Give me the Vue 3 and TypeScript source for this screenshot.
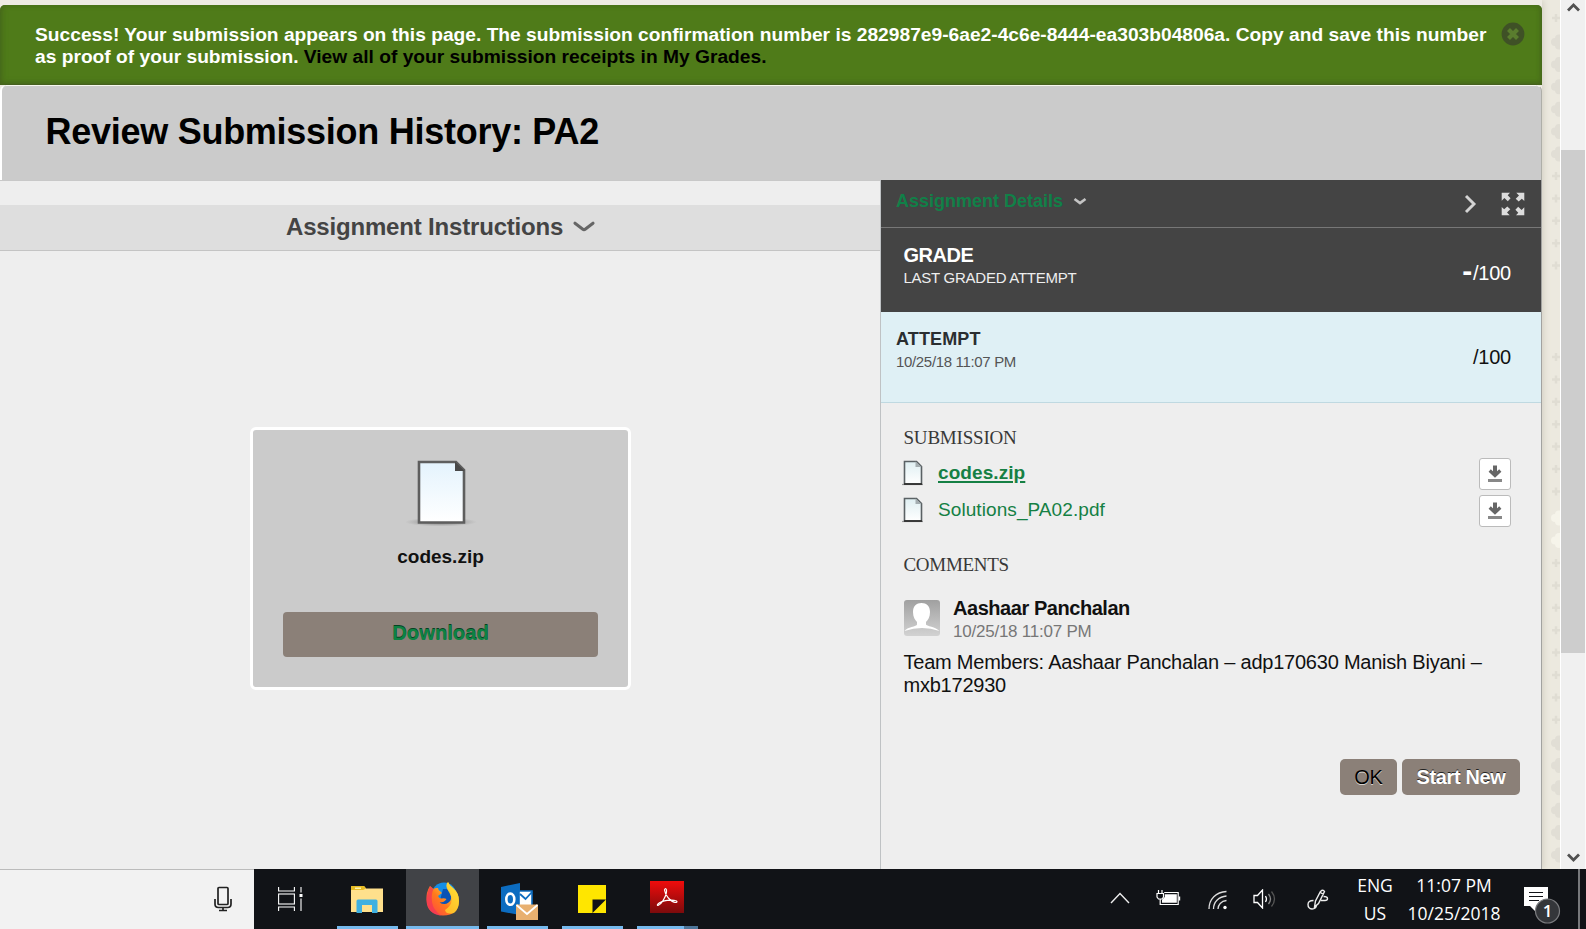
<script setup lang="ts">
type Mark = { y: number; kind: 'blob' | 'plus' | 'light' }

const files = [
  { name: 'codes.zip', current: true },
  { name: 'Solutions_PA02.pdf', current: false },
]

const range = (from: number, count: number, kind: Mark['kind']): Mark[] =>
  Array.from({ length: count }, (_, i) => ({ y: from + i * 22.4, kind }))

// Suit-like ornaments repeated down the page's right margin
const marks: Mark[] = [
  ...range(18, 1, 'plus'),
  ...range(42, 6, 'blob'),
  ...range(176, 5, 'plus'),
  ...range(357, 7, 'plus'),
  ...range(518, 2, 'light'),
  ...range(563, 8, 'plus'),
  ...range(743, 6, 'blob'),
]
</script>

<template>
  <div class="screen">
    <div class="browser">
      <div class="page">
        <div class="banner">
          <p>Success! Your submission appears on this page. The submission confirmation number is 282987e9-6ae2-4c6e-8444-ea303b04806a. Copy and save this number<br>as proof of your submission. <a>View all of your submission receipts in My Grades.</a></p>
          <svg class="close" width="24" height="24" viewBox="0 0 24 24">
            <circle cx="12" cy="12" r="11.4" fill="#3f5126" />
            <path d="M7.500 7.500l9 9M16.500 7.500l-9 9" stroke="#5a7d2e" stroke-width="4.200" />
          </svg>
        </div>
        <div class="title"><h1>Review Submission History: PA2</h1></div>
        <div class="content">
          <main class="left">
            <div class="instructions">
              <span>Assignment Instructions</span>
              <svg width="22" height="12" viewBox="0 0 22 12"><path d="M2 2.200L9.500 8Q11 9.200 12.500 8L20 2.200" fill="none" stroke="#666" stroke-width="3" stroke-linecap="round" /></svg>
            </div>
            <div class="preview">
              <svg class="bigdoc" width="72" height="72" viewBox="0 0 72 72">
                <defs>
                  <linearGradient id="paper" x1="0" y1="0" x2="0" y2="1"><stop offset="0" stop-color="#e4f3fd" /><stop offset="1" stop-color="#fff" /></linearGradient>
                  <radialGradient id="shade"><stop offset="0" stop-color="#555" stop-opacity=".8" /><stop offset="1" stop-color="#777" stop-opacity="0" /></radialGradient>
                </defs>
                <ellipse cx="36" cy="63" rx="36" ry="4.500" fill="url(#shade)" />
                <path d="M14 3h37l8 8v52.500H14z" fill="url(#paper)" stroke="#5e5e5e" stroke-width="2.600" />
                <path d="M50 2.500v9.500h9.500z" fill="#484848" />
              </svg>
              <strong>codes.zip</strong>
              <button class="download">Download</button>
            </div>
          </main>
          <aside class="side">
            <div class="details">
              <span>Assignment Details</span>
              <svg class="small-chev" width="14" height="9" viewBox="0 0 14 9"><path d="M1.500 2L7 6L12.500 2" fill="none" stroke="#c4c4c4" stroke-width="2.700" /></svg>
              <svg class="next" width="13" height="20" viewBox="0 0 13 20"><path d="M2 2L10 10L2 18" fill="none" stroke="#d4d4d4" stroke-width="2.900" /></svg>
              <svg class="expand" width="24" height="24" viewBox="0 0 24 24">
                <g v-for="a in [0, 90, 180, 270]" :key="a" :transform="`rotate(${a} 12 12)`">
                  <path d="M.7 .7h8.300L6.700 3.200L9.600 6.300L6.800 9.300L3.400 6L.7 8.700z" fill="#ddd" />
                </g>
              </svg>
            </div>
            <div class="grade">
              <div><h2>GRADE</h2><p>LAST GRADED ATTEMPT</p></div>
              <div class="score"><b>-</b><span>/100</span></div>
            </div>
            <div class="attempt">
              <div><h2>ATTEMPT</h2><p>10/25/18 11:07 PM</p></div>
              <div class="score"><span>/100</span></div>
            </div>
            <section class="body">
              <h3 class="sub">SUBMISSION</h3>
              <div v-for="f in files" :key="f.name" class="file" :class="{ current: f.current }">
                <svg width="22" height="26" viewBox="0 0 22 26">
                  <defs><linearGradient id="sheet" x1="0" y1="0" x2="0" y2="1"><stop offset="0" stop-color="#dfeff2" /><stop offset="1" stop-color="#fff" /></linearGradient></defs>
                  <path d="M0 24.500h21" stroke="#999" stroke-width="1.200" />
                  <path d="M2.500 1.500h12l5 5v17.500h-17z" fill="url(#sheet)" stroke="#5a6164" stroke-width="1.600" />
                  <path d="M13.500 1.500v5.500h6z" fill="#a4adb0" />
                  <path d="M2 24h18" stroke="#333" stroke-width="1.800" />
                </svg>
                <a>{{ f.name }}</a>
                <button class="get">
                  <svg width="16" height="18" viewBox="0 0 16 18"><path d="M8 .5v8" stroke="#666" stroke-width="4" /><path d="M2.700 5.500L8 10.500L13.300 5.500" fill="none" stroke="#666" stroke-width="3.200" /><path d="M1 15.500h14" stroke="#888" stroke-width="3" /></svg>
                </button>
              </div>
              <h3 class="com">COMMENTS</h3>
              <div class="author">
                <svg width="36" height="36" viewBox="0 0 36 36">
                  <defs><linearGradient id="av" x1="0" y1="0" x2="0" y2="1"><stop offset="0" stop-color="#a0a0a0" /><stop offset="1" stop-color="#d2d2d2" /></linearGradient></defs>
                  <rect width="36" height="36" rx="3" fill="url(#av)" />
                  <path d="M9 12C9 6 12.500 3 17.500 3S26 6 26 12c0 5-2 8-4 10v2.500c0 1.500 10 2.500 13.500 6.500Q18 25 .5 31C3 27 13 26.500 13 24.500V22c-2-2-4-5-4-10z" fill="#fff" />
                </svg>
                <div><strong>Aashaar Panchalan</strong><span>10/25/18 11:07 PM</span></div>
              </div>
              <p class="comment">Team Members: Aashaar Panchalan – adp170630 Manish Biyani –<br>mxb172930</p>
              <div class="actions">
                <button class="ok">OK</button>
                <button class="new">Start New</button>
              </div>
            </section>
          </aside>
        </div>
      </div>
      <svg class="texture" width="18" height="869" viewBox="0 0 18 869">
        <template v-for="m in marks" :key="m.y">
          <path v-if="m.kind === 'plus'" :transform="`translate(14 ${m.y})`" d="M-4 0h8M0-4v8" stroke="#e0ddd3" stroke-width="2.500" />
          <g v-else :transform="`translate(14 ${m.y})`" :fill="m.kind === 'light' ? '#f6f4ea' : '#e1ded5'">
            <circle cx="-1" cy="0" r="4" /><circle cx="3" cy="-3.500" r="4" /><circle cx="3" cy="3.500" r="4" />
          </g>
        </template>
      </svg>
      <div class="scroll">
        <svg width="24" height="16" viewBox="0 0 24 16"><path d="M7 10.500L12.500 5L18 10.500" fill="none" stroke="#505050" stroke-width="2.800" /></svg>
        <div class="thumb"></div>
        <svg class="down" width="24" height="22" viewBox="0 0 24 22"><path d="M7 7.500L12.500 13L18 7.500" fill="none" stroke="#505050" stroke-width="2.800" /></svg>
      </div>
    </div>

    <footer class="taskbar">
      <div class="search">
        <svg width="18" height="26" viewBox="0 0 18 26" fill="none" stroke="#222" stroke-width="1.700"><rect x="4" y="1.500" width="10" height="17" rx="1" /><path d="M1 13v5q0 3.500 3.500 3.500h9q3.500 0 3.500-3.500v-5M9 21.500v3M5 24.500h8" /></svg>
      </div>
      <div class="task view">
        <svg width="26" height="24" viewBox="0 0 26 24" fill="none" stroke="#fff" stroke-width="1.100"><path d="M.6 0v4h15.800V0M.6 24v-4h15.800v4M23 0v5.500M23 11.500V24" /><rect x=".6" y="7" width="15.800" height="10" /><rect x="21.500" y="7" width="3" height="3" fill="#fff" stroke="none" /></svg>
      </div>
      <div class="task folder">
        <svg width="32" height="27" viewBox="0 0 32 27"><path d="M0 1q0-1 1-1h12l2 2.500h17V26H0z" fill="#ffe08c" /><path d="M0 1q0-1 1-1h12l2 2.500L12 4H0z" fill="#e8bd24" /><path d="M4 1.500h6v1.500H4z" fill="#fff2b0" /><path d="M5.500 27V15q0-1.500 1.500-1.500h18q1.500 0 1.500 1.500v12H21v-8H11v8z" fill="#3fb0e0" /></svg>
      </div>
      <div class="task firefox">
        <svg width="34" height="35" viewBox="0 0 34 35">
          <defs>
            <linearGradient id="ff" x1="0" y1="1" x2="1" y2="0"><stop offset="0" stop-color="#ff3a4c" /><stop offset=".45" stop-color="#ff7a1c" /><stop offset=".8" stop-color="#ffd43a" /><stop offset="1" stop-color="#fff04a" /></linearGradient>
          </defs>
          <circle cx="18" cy="14" r="12.500" fill="#148fe8" />
          <path d="M17 8h8v15H13z" fill="#0a53b5" />
          <path d="M4 5l3.500 3Q9 6.500 12 7q0 2 2.500 3.500l1.500 1.500-4 3q1 2.500 3.500 2.500 3-.5 5 .5-2 3.500-7 3.500 5 3 9 0 4-3 2-8-1-3.500-3-5Q19 4 22 1q1 3 5 6 6 5 6 13 0 14-16 14.500Q1 34 .5 19 0 11 4 5z" fill="url(#ff)" />
          <path d="M4 5q-3 6-3.500 13Q1 33 15 34.500 7 29 6 21 5 13 7.500 8z" fill="#f0315c" opacity=".65" />
          <path d="M22 1q1 3 5 6 6 5 6 13 0 8-5 12-8 2-9-3 10-7 5-16-4-5-2-12z" fill="#ffd72f" opacity=".75" />
        </svg>
      </div>
      <div class="task outlook">
        <svg width="38" height="38" viewBox="0 0 38 38"><path d="M0 4L19 0v32L0 28.500z" fill="#0c6cc0" /><path d="M18 8h13v16H18z" fill="#fff" stroke="#0c6cc0" stroke-width="1.600" /><path d="M19 11l5.500 5 6.500-7" fill="none" stroke="#0c6cc0" stroke-width="1.800" /><ellipse cx="9.300" cy="16.200" rx="4" ry="5.600" fill="none" stroke="#fff" stroke-width="2.600" /><path d="M15 21.500h22V37H15z" fill="#e8b070" /><path d="M15.500 22l10.500 9 10.500-9" fill="none" stroke="#fff" stroke-width="1.800" /></svg>
      </div>
      <div class="task notes">
        <svg width="28" height="28" viewBox="0 0 28 28"><path d="M0 0h28v28H0z" fill="#ffe600" /><path d="M14.500 28V14.500H28z" fill="#111317" /></svg>
      </div>
      <div class="task acrobat">
        <svg width="34" height="32" viewBox="0 0 34 32"><defs><linearGradient id="ac" x1="0" y1="0" x2="0" y2="1"><stop offset="0" stop-color="#f00c0c" /><stop offset="1" stop-color="#7c0b0c" /></linearGradient></defs><path d="M0 0h34v32H0z" fill="url(#ac)" /><path d="M8 24.500C12 23 17 14 16.500 9q-1-3-2 0C15 13.500 20 20.500 25 21.500q3 0 1.500-1.500C22 18 12 19.500 8.500 22.500q-2 2-.5 2z" fill="none" stroke="#fff" stroke-width="1.200" /></svg>
      </div>
      <div class="tray">
        <svg class="t1" width="20" height="12" viewBox="0 0 20 12"><path d="M1 11l9-9.500L19 11" fill="none" stroke="#eee" stroke-width="1.400" /></svg>
        <svg class="t2" width="25" height="18" viewBox="0 0 25 18"><path d="M1 4.500h6.500v3.500L6 10H2.500L1 8zM2.500 1v3M6 1v3M4.200 10v5.500h18v-12h-14" fill="none" stroke="#fff" stroke-width="1.200" /><path d="M6 13.800V10.800L8.800 8V5.200h12v8.600zM22.800 7.500h1.400v4h-1.400z" fill="#fff" /></svg>
        <svg class="t3" width="20" height="20" viewBox="0 0 20 20" fill="none" stroke="#ddd" stroke-width="1.300"><path d="M1 19C1 9 8 2 18.500 1.500M5.500 19C5.500 12 11 6.500 18.500 6M10 19c0-4 3-8 8.500-8.500" /><circle cx="17" cy="17.500" r="1.700" fill="#fff" stroke="none" /></svg>
        <svg class="t4" width="24" height="20" viewBox="0 0 24 20" fill="none" stroke="#fff" stroke-width="1.300"><path d="M1 6.500h3.500L9.500 1v18l-5-5.500H1z" /><path d="M12.500 7q2 3 0 6" /><path d="M15.500 5q4 5 0 10" stroke="#888" /><path d="M18.500 2.500q6 7.500 0 15" stroke="#555" /></svg>
        <svg class="t5" width="22" height="22" viewBox="0 0 22 22" fill="none" stroke="#eee" stroke-width="1.400"><path d="M7.500 18L8.500 12L13.500 2.500Q16 0 17.500 2.500L11.500 14.500zM13.500 3.500l3 2M6.500 11.500Q1 11.500 1 15.500T5 20Q9 20 9.500 16.500M14 11.500H18q2.500 0 2.500-2T16.500 7.500" /></svg>
        <div class="lang"><span>ENG</span><span>US</span></div>
        <div class="clock"><span>11:07 PM</span><span>10/25/2018</span></div>
        <svg class="t6" width="37" height="38" viewBox="0 0 37 38"><path d="M0 0h24v19H12v6l-6-6H0z" fill="#fff" /><path d="M5 5.500h14M5 9.500h14M5 13.500h10" stroke="#111317" stroke-width="1.200" /><circle cx="23.500" cy="24" r="12" fill="#34363a" stroke="#7a7b7e" stroke-width="1.200" /><text x="23.500" y="30" text-anchor="middle" fill="#fff" font-family="Open Sans" font-weight="600" font-size="17">1</text></svg>
      </div>
    </footer>
  </div>
</template>

<style>
html, body { margin: 0; overflow: hidden; }
</style>

<style scoped>
* { box-sizing: border-box; }
h1, h2, h3, p { margin: 0; font-weight: normal; white-space: nowrap; }
span, a, strong { white-space: nowrap; }
svg { display: block; flex: none; }
button { border: 0; padding: 0; font: inherit; }
.screen { width: 1586px; height: 929px; display: flex; flex-direction: column; overflow: hidden; font-family: "Liberation Sans", Arial, sans-serif; color: #111; background: #eee; }
.browser { height: 869px; display: flex; background: #ece9df; }
.page { width: 1542px; display: flex; flex-direction: column; padding-top: 5px; background: #eeebe3; box-shadow: 2px 0 6px #d5d2c6; }
.banner { height: 80px; display: flex; background: #4f7b19; border-radius: 5px 5px 0 0; box-shadow: inset 0 -3px 6px -2px #46601f, inset -3px 0 5px -2px #46681b, inset 3px 0 6px -2px #46681b; padding: 19px 17px 0 35px; justify-content: space-between; }
.banner p { font-size: 19.2px; line-height: 22px; font-weight: bold; letter-spacing: .005px; color: #fff; }
.banner a { color: #000; }
.close { margin-top: -2px; }
.title { height: 95px; background: #cbcbcb; border-top: 1px solid #f5f8ee; border-left: 2px solid #fff; border-right: 1px solid #aeaea8; border-radius: 6px 6px 0 0; padding: 26px 0 0 43.5px; box-shadow: 0 -6px 0 -5px #46601f, 0 4px 0 0 #cbcbcb; }
.title { position: relative; }
.title::before { content: ""; position: absolute; z-index: -1; }
.title h1 { font-size: 36px; line-height: 40px; font-weight: bold; letter-spacing: -.27px; color: #000; }
.content { flex: 1; display: flex; border-right: 1px solid #a2a2a0; position: relative; }
.left { width: 880px; background: #eee; border-top: 1px solid #c8c8c8; padding-top: 24px; }
.instructions { height: 46px; background: #dedede; border-bottom: 1px solid #c4c4c4; display: flex; padding: 8px 0 0 286px; font-size: 24px; line-height: 28px; font-weight: bold; letter-spacing: -.18px; color: #444; }
.instructions svg { margin: 8px 0 0 10px; }
.preview { width: 381px; height: 263px; margin: 176px 0 0 250px; background: #cbcbcb; border: 3px solid #fff; border-radius: 6px; display: flex; flex-direction: column; align-items: center; padding-top: 29px; }
.preview strong { font-size: 19px; line-height: 22px; margin-top: 15px; }
.download { width: 315px; height: 45px; margin-top: 44px; background: #8b8078; border-radius: 4px; color: #0d8243; font-size: 20.200px; font-weight: bold; line-height: 42px; padding-bottom: 3px; text-shadow: 0 -1px 0 #064222; }
.side { width: 661px; background: #eee; border-left: 1px solid #bfc2c4; display: flex; flex-direction: column; }
.details { height: 48px; background: #444; border-bottom: 1px solid #777; display: flex; padding-left: 15px; font-size: 18px; line-height: 20px; font-weight: bold; color: #118048; }
.details span { margin-top: 11px; }
.small-chev { margin: 17px 0 0 10px; }
.next { margin: 14px 24px 0 auto; }
.expand { margin: 12px 16px 0 0; }
.grade { height: 84px; background: #444; color: #fff; display: flex; justify-content: space-between; padding: 15px 30px 0 22.500px; }
.grade h2 { font-size: 20px; line-height: 22px; font-weight: bold; letter-spacing: -.5px; padding-top: 1px; }
.grade p { font-size: 15px; line-height: 20px; letter-spacing: -.26px; margin-top: 2px; color: #eee; }
.score { font-size: 20px; line-height: 24px; letter-spacing: -.25px; display: flex; margin-top: 18px; }
.score b { font-size: 30px; line-height: 20px; margin-right: 1px; }
.attempt { height: 91px; background: #dff0f5; border-bottom: 1px solid #bfd9e1; display: flex; justify-content: space-between; padding: 17px 30px 0 15px; }
.attempt .score { margin-top: 16px; }
.attempt h2 { font-size: 18px; line-height: 20px; font-weight: bold; letter-spacing: .12px; color: #2a2e30; }
.attempt p { font-size: 15px; line-height: 18px; letter-spacing: -.33px; color: #555; margin-top: 4px; }
.body { padding: 23px 21px 0 22.500px; }
.body h3 { font-family: "Liberation Serif", Georgia, serif; font-size: 19px; line-height: 24px; letter-spacing: -.2px; color: #383838; width: max-content; }
.file { height: 37px; display: flex; font-size: 19px; line-height: 24px; color: #158044; letter-spacing: .08px; }
.sub + .file { margin-top: 8px; }
.file > svg { margin: 2px 14px 0 -1.500px; }
.file a { margin-top: 3px; }
.current a { font-weight: bold; text-decoration: underline; text-decoration-thickness: 2px; text-underline-offset: 2px; }
.get { width: 32px; height: 32px; background: #fff; border: 1px solid #bbb; border-radius: 3px; margin: 0 9px 0 auto; display: flex; justify-content: center; padding-top: 6px; }
.body .com { margin-top: 21px; letter-spacing: -.3px; }
.author { display: flex; margin-top: 23px; height: 48px; }
.author div { display: flex; flex-direction: column; align-items: flex-start; margin-left: 13.500px; }
.author strong { font-size: 20px; line-height: 22px; letter-spacing: -.45px; margin-top: -3px; }
.author span { font-size: 17px; line-height: 22px; letter-spacing: -.23px; color: #777; margin-top: 2px; }
.comment { font-size: 20px; line-height: 23px; letter-spacing: -.225px; margin-top: 3px; }
.actions { display: flex; justify-content: flex-end; gap: 5px; margin-top: 62px; }
.actions button { height: 36px; background: #8b8078; border-radius: 5px; font-size: 20px; line-height: 36px; letter-spacing: -.25px; }
.ok { width: 57px; color: #000; text-shadow: 0 1px 0 #d8d4d0; }
.actions .new { width: 118px; color: #fff; font-weight: bold; text-shadow: 0 -1px 0 #222; letter-spacing: -.35px; }
.scroll { width: 26px; height: 869px; background: #f0f0f0; border-left: 1px solid #fff; border-right: 1px solid #fafafa; display: flex; flex-direction: column; }
.thumb { height: 503px; margin-top: 134px; background: #cdcdcd; }
.down { margin-top: auto; }
.taskbar { height: 60px; background: #111317; display: flex; }
.search { width: 254px; background: #f2f2f2; border-top: 1px solid #bbb; padding: 16px 0 0 214px; }
.task { height: 60px; position: relative; }
.view { width: 83px; padding: 18px 0 0 24px; }
.folder { width: 61px; padding: 17px 0 0 14px; border-bottom: 3px solid #76b9ed; margin-right: 8px; }
.firefox { width: 73px; padding: 12px 0 0 20px; background: #414347; border-bottom: 3px solid #76b9ed; margin-right: 8px; }
.outlook { width: 61px; padding: 14px 0 0 14px; border-bottom: 3px solid #76b9ed; margin-right: 14px; }
.notes { width: 61px; padding: 16px 0 0 16px; border-bottom: 3px solid #76b9ed; margin-right: 14px; }
.acrobat { width: 61px; padding: 12px 0 0 13px; }
.acrobat::after { content: ""; position: absolute; left: 0; bottom: 0; width: 61px; height: 3px; background: linear-gradient(90deg, #76b9ed 47px, #4d7599 47px); }
.tray { flex: 1; display: flex; color: #fff; font-family: "Open Sans", "Noto Sans", sans-serif; font-size: 17.500px; line-height: 28px; margin-right: 6px; border-right: 2px solid #77787b; }
.tray .t1 { margin: 23px 0 0 412px; }
.tray .t2 { margin: 20px 0 0 26px; }
.tray .t3 { margin: 21px 0 0 27px; }
.tray .t4 { margin: 20px 0 0 25px; }
.tray .t5 { margin: 20px 0 0 30px; }
.lang, .clock { display: flex; flex-direction: column; align-items: center; width: 36px; padding-top: 2px; margin-left: 28px; }
.clock { width: 94px; margin-left: 14px; }
.t6 { margin: 18px 0 0 23px; }
</style>
